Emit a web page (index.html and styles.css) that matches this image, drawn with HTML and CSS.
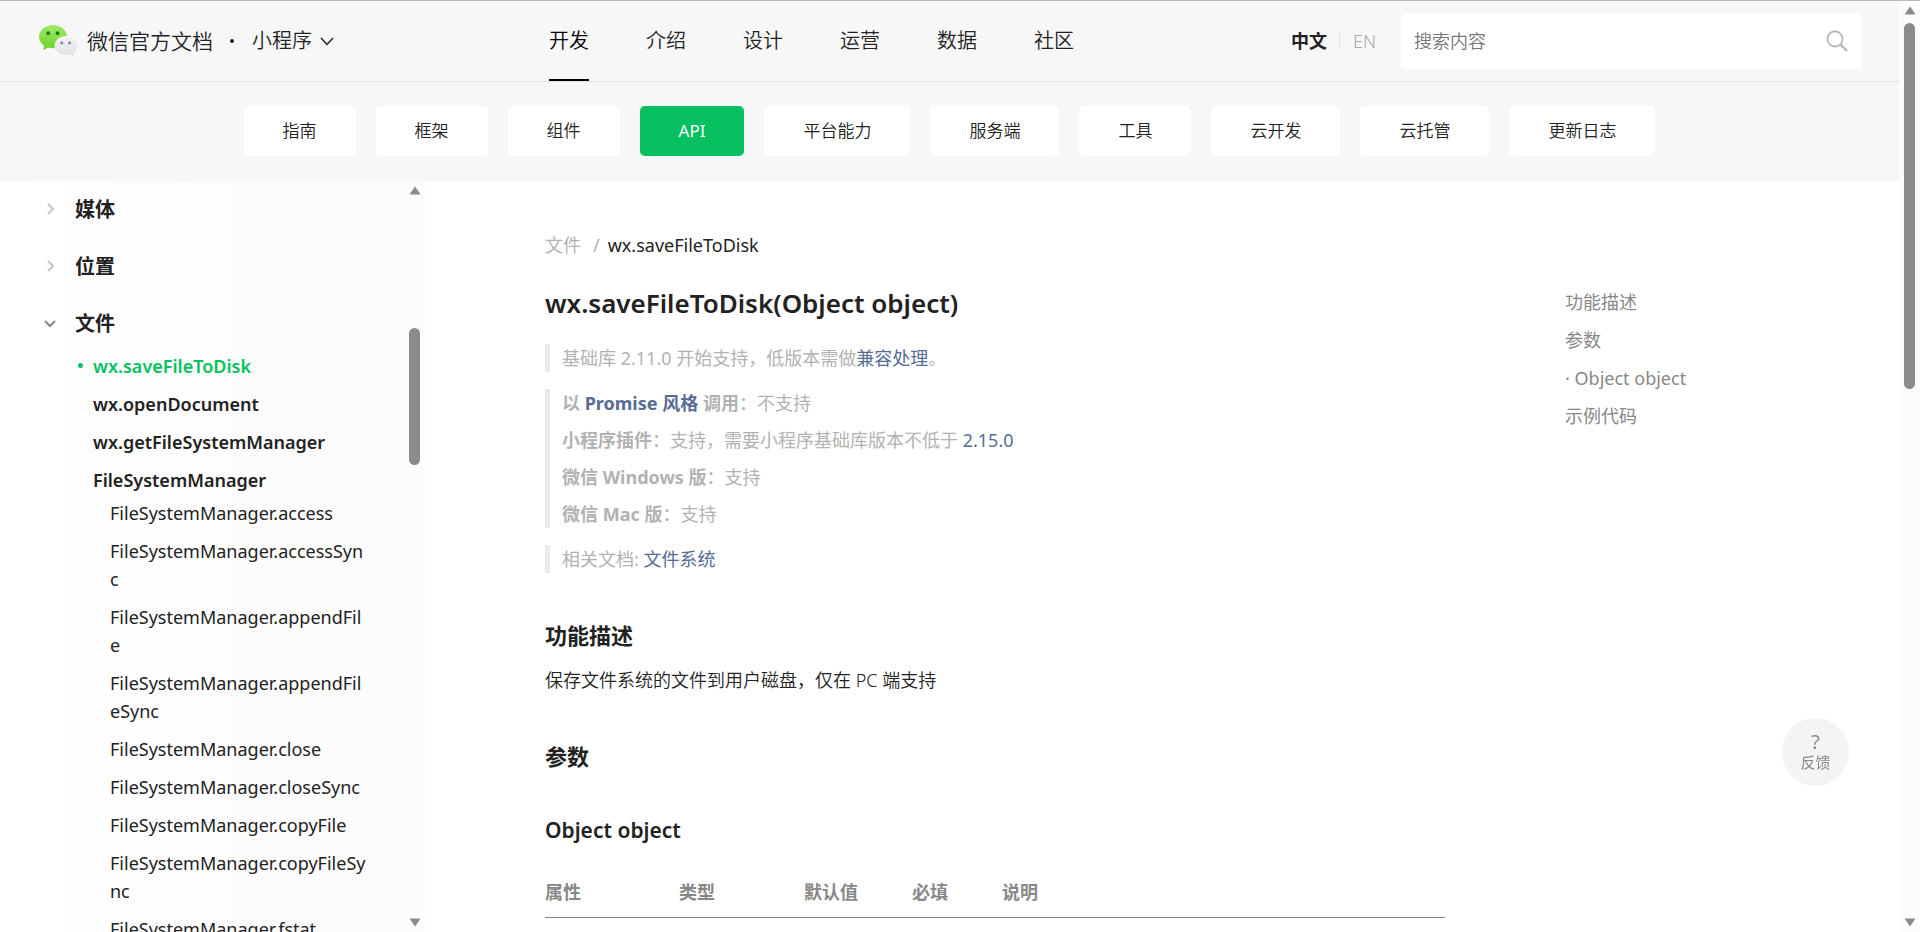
FILE: index.html
```html
<!DOCTYPE html>
<html lang="zh-CN">
<head>
<meta charset="utf-8">
<title>wx.saveFileToDisk(Object object) | 微信开放文档</title>
<link rel="stylesheet" href="styles.css">
</head>
<body>
<div class="page">
  <div class="view">
    <header class="header">
      <div class="brand">
        <svg class="logo" width="38" height="32" viewBox="0 0 38 32" aria-hidden="true">
          <defs>
            <linearGradient id="green" x1="0" y1="0" x2="0" y2="1"><stop offset="0" stop-color="#9eea6a"/><stop offset="1" stop-color="#6fcf2c"/></linearGradient>
            <linearGradient id="grey" x1="0" y1="0" x2="0" y2="1"><stop offset="0" stop-color="#f3f4f6"/><stop offset="1" stop-color="#dfe1e6"/></linearGradient>
          </defs>
          <path fill="url(#green)" d="M14 0C6.300 0 0 5.200 0 11.800c0 3.700 2 7 5.200 9.200L4.200 24.200c-.1.500.3.800.7.600l4.200-2.200c1.600.4 3.200.7 4.900.7 7.700 0 14-5.200 14-11.600C28 5.200 21.700 0 14 0z"/>
          <circle cx="9.200" cy="8.200" r="1.900" fill="#1f7a1f"/><circle cx="18.500" cy="8.200" r="1.900" fill="#1f7a1f"/>
          <path fill="url(#grey)" d="M27 11c6.300 0 11.300 4.300 11.300 9.700 0 3-1.600 5.600-4.100 7.400l.8 2.500c.1.400-.3.700-.6.500l-3.400-1.700c-1.300.3-2.600.5-4 .5-6.300 0-11.400-4.200-11.400-9.400S20.700 11 27 11z"/>
          <circle cx="22.800" cy="17.800" r="1.600" fill="#8d9094"/><circle cx="30.500" cy="17.800" r="1.600" fill="#8d9094"/>
        </svg>
        <a class="brand-name" href="#">微信官方文档</a>
        <span class="brand-dot"></span>
        <button class="product" type="button">小程序
          <svg width="14" height="9" viewBox="0 0 14 9" fill="none" stroke="#222" stroke-width="1.500" aria-hidden="true"><path d="M1 1l6 6.500L13 1"/></svg>
        </button>
      </div>
      <nav class="nav">
        <a class="nav-link nav-active" href="#">开发</a>
        <a class="nav-link" href="#">介绍</a>
        <a class="nav-link" href="#">设计</a>
        <a class="nav-link" href="#">运营</a>
        <a class="nav-link" href="#">数据</a>
        <a class="nav-link" href="#">社区</a>
      </nav>
      <div class="lang"><a class="lang-on" href="#">中文</a><a class="lang-off" href="#">EN</a></div>
      <form class="search">
        <input class="search-input" type="text" placeholder="搜索内容" aria-label="搜索内容">
        <button class="search-btn" type="button" aria-label="搜索">
          <svg width="22" height="22" viewBox="0 0 22 22" fill="none" stroke="#b2b2b2" stroke-width="1.600" aria-hidden="true"><circle cx="9" cy="9" r="7.600"/><path d="M14.500 14.500L21 21" stroke-width="2"/></svg>
        </button>
      </form>
    </header>
    <nav class="tabs">
      <a class="tab" href="#">指南</a>
      <a class="tab" href="#">框架</a>
      <a class="tab" href="#">组件</a>
      <a class="tab tab-active" href="#">API</a>
      <a class="tab" href="#">平台能力</a>
      <a class="tab" href="#">服务端</a>
      <a class="tab" href="#">工具</a>
      <a class="tab" href="#">云开发</a>
      <a class="tab" href="#">云托管</a>
      <a class="tab" href="#">更新日志</a>
    </nav>
    <div class="body">
      <aside class="side">
        <div class="side-menu">
          <a class="group" href="#"><svg class="chev" width="14" height="14" viewBox="0 0 14 14" aria-hidden="true"><path d="M4 1l5 5-5 5"/></svg>媒体</a>
          <a class="group" href="#"><svg class="chev" width="14" height="14" viewBox="0 0 14 14" aria-hidden="true"><path d="M4 1l5 5-5 5"/></svg>位置</a>
          <a class="group" href="#"><svg class="chev chev-open" width="14" height="14" viewBox="0 0 14 14" aria-hidden="true"><path d="M1 4l5 5 5-5"/></svg>文件</a>
          <ul class="sub">
            <li><a class="item item-on" href="#">wx.saveFileToDisk</a></li>
            <li><a class="item" href="#">wx.openDocument</a></li>
            <li><a class="item" href="#">wx.getFileSystemManager</a></li>
            <li><a class="item" href="#">FileSystemManager</a></li>
          </ul>
          <ul class="leafs">
            <li><a class="leaf" href="#">FileSystemManager.access</a></li>
            <li><a class="leaf" href="#">FileSystemManager.accessSync</a></li>
            <li><a class="leaf" href="#">FileSystemManager.appendFile</a></li>
            <li><a class="leaf" href="#">FileSystemManager.appendFileSync</a></li>
            <li><a class="leaf" href="#">FileSystemManager.close</a></li>
            <li><a class="leaf" href="#">FileSystemManager.closeSync</a></li>
            <li><a class="leaf" href="#">FileSystemManager.copyFile</a></li>
            <li><a class="leaf" href="#">FileSystemManager.copyFileSync</a></li>
            <li><a class="leaf" href="#">FileSystemManager.fstat</a></li>
          </ul>
        </div>
        <div class="bar side-bar">
          <svg class="arrow" width="12" height="9" viewBox="0 0 12 9" aria-hidden="true"><path d="M6 0.500L11.500 8.500H.5z"/></svg>
          <div class="track"><div class="thumb side-thumb"></div></div>
          <svg class="arrow" width="12" height="9" viewBox="0 0 12 9" aria-hidden="true"><path d="M6 8.500L11.500 .5H.5z"/></svg>
        </div>
      </aside>
      <main class="content">
        <div class="crumbs"><a class="crumb" href="#">文件</a><span class="slash">/</span><span>wx.saveFileToDisk</span></div>
        <h1 class="title">wx.saveFileToDisk(Object object)</h1>
        <blockquote class="note"><p>基础库 2.11.0 开始支持，低版本需做<a class="link" href="#">兼容处理</a>。</p></blockquote>
        <blockquote class="note">
          <p><strong>以 <a class="link" href="#">Promise 风格</a> 调用</strong>：不支持</p>
          <p><strong>小程序插件</strong>：支持，需要小程序基础库版本不低于 <a class="link" href="#">2.15.0</a></p>
          <p><strong>微信 Windows 版</strong>：支持</p>
          <p><strong>微信 Mac 版</strong>：支持</p>
        </blockquote>
        <blockquote class="note"><p>相关文档: <a class="link" href="#">文件系统</a></p></blockquote>
        <h2 class="section">功能描述</h2>
        <p class="text">保存文件系统的文件到用户磁盘，仅在 PC 端支持</p>
        <h2 class="section">参数</h2>
        <h3 class="subsection">Object object</h3>
        <table class="params">
          <thead><tr><th class="c-name">属性</th><th class="c-type">类型</th><th class="c-def">默认值</th><th class="c-req">必填</th><th>说明</th></tr></thead>
        </table>
      </main>
      <nav class="toc">
        <a class="toc-link" href="#">功能描述</a>
        <a class="toc-link" href="#">参数</a>
        <a class="toc-link" href="#">· Object object</a>
        <a class="toc-link" href="#">示例代码</a>
      </nav>
    </div>
  </div>
  <div class="bar">
    <svg class="arrow" width="12" height="9" viewBox="0 0 12 9" aria-hidden="true"><path d="M6 0.500L11.500 8.500H.5z"/></svg>
    <div class="track"><div class="thumb page-thumb"></div></div>
    <svg class="arrow" width="12" height="9" viewBox="0 0 12 9" aria-hidden="true"><path d="M6 8.500L11.500 .5H.5z"/></svg>
  </div>
  <button class="feedback" type="button"><span class="feedback-mark">?</span>反馈</button>
</div>
</body>
</html>
```
FILE: styles.css
```css
* { box-sizing: border-box; }
body, h1, h2, h3, p, ul, blockquote { margin: 0; padding: 0; }
body, input, button { font-family: "Noto Sans", "Noto Sans CJK SC", sans-serif; font-weight: 350; }
body { background: #fff; color: #222; font-size: 18px; line-height: 28px; }
a { color: inherit; text-decoration: none; }
ul { list-style: none; }
button { border: 0; background: none; padding: 0; color: inherit; cursor: pointer; }
strong { font-weight: 700; }

.page { display: flex; height: 100vh; border-top: 1px solid #bbb; overflow: hidden; }
.view { flex: 1; min-width: 0; display: flex; flex-direction: column; }

.header { display: flex; align-items: center; height: 81px; padding-right: 37px; background: #f7f7f7; border-bottom: 1px solid #e5e5e5; }
.brand { display: flex; align-items: center; width: 549px; padding-left: 39px; }
.logo { overflow: visible; }
.brand-name { margin-left: 10px; font-size: 21px; }
.brand-dot { width: 4px; height: 4px; margin: 0 18px 0 17px; border-radius: 50%; background: #222; }
.product { display: flex; align-items: center; gap: 8px; font-size: 20px; line-height: 28px; }
.nav { display: flex; gap: 57px; flex: 1; align-self: stretch; }
.nav-link { display: flex; align-items: center; font-size: 20px; border-bottom: 2px solid transparent; border-top: 2px solid transparent; }
.nav-active { color: #000; border-bottom-color: #000; }
.lang { display: flex; align-items: center; }
.lang-on { padding-right: 12px; line-height: 16px; font-weight: 700; border-right: 1px solid #e0e0e0; }
.lang-off { padding-left: 13px; color: #aaa; }
.search { display: flex; align-items: center; width: 461px; height: 56px; margin-left: 25px; padding: 0 14px 0 13px; background: #fff; border-radius: 4px; }
.search-input { flex: 1; min-width: 0; padding: 0; border: 0; outline: 0; font-size: 18px; background: none; }
.search-input::placeholder { color: #757575; }
.search-btn { display: flex; }

.tabs { display: flex; justify-content: center; gap: 20px; padding: 24px 0 25px; background: #f7f7f7; font-size: 17px; }
.tab { padding: 11px 39px; border-radius: 5px; background: #fff; }
.tab-active { background: #07c160; color: #fff; font-weight: 400; }

.body { flex: 1; min-height: 0; display: flex; }
.side { display: flex; width: 425px; background: linear-gradient(90deg, #fff, #fcfcfc 60%); overflow: hidden; }
.side-menu { flex: 1; padding-left: 44px; }
.group { display: flex; align-items: center; gap: 17px; height: 57px; font-size: 20px; font-weight: 700; }
.chev { fill: none; stroke: #c4c4c4; stroke-width: 2; }
.chev-open { stroke: #888; }
.sub { display: grid; gap: 10px; padding-left: 49px; }
.item { position: relative; display: block; font-weight: 600; }
.item-on { color: #07c160; }
.item-on::before { content: ""; position: absolute; left: -15px; top: 11px; width: 5px; height: 5px; border-radius: 50%; background: #07c160; }
.leafs { display: grid; gap: 10px; width: 324px; padding: 5px 0 0 66px; }
.leaf { display: block; font-weight: 400; word-break: break-all; }

.bar { display: flex; flex-direction: column; align-items: center; width: 21px; padding: 5px 0; background: #fcfcfc; }
.side-bar { background: none; }
.arrow { fill: #8a8a8a; flex: none; }
.track { flex: 1; width: 11px; }
.thumb { border-radius: 6px; background: #8b8b8b; }
.side-thumb { height: 19%; margin-top: 133px; }
.page-thumb { height: 366px; margin-top: 8px; }

.content { flex: 1; min-width: 0; padding: 50px 0 0 120px; }
.crumbs { display: flex; gap: 12px; font-weight: 400; }
.crumb, .slash { color: #b2b2b2; }
.slash { margin-right: -4px; }
.title { margin: 26px 0 23px; font-size: 26px; line-height: 36px; font-weight: 600; }
.note { display: grid; gap: 9px; margin-bottom: 17px; padding-left: 12px; border-left: 5px solid #ebebeb; color: #b2b2b2; }
.note p { font-weight: 400; }
.link { color: #576b95; }
.section { margin: 46px 0 15px; font-size: 22px; line-height: 32px; font-weight: 700; }
.subsection { margin: 42px 0 32px; font-size: 21px; line-height: 32px; font-weight: 600; }
.params { width: 100%; border-collapse: collapse; color: #888; }
.params th { padding: 0 0 11px; text-align: left; border-bottom: 1px solid #888; font-weight: 700; }
.params .c-name { width: 134px; }
.params .c-type { width: 125px; }
.params .c-def { width: 108px; }
.params .c-req { width: 90px; }
.toc { display: flex; flex-direction: column; gap: 10px; width: 334px; margin-left: 120px; padding-top: 107px; color: #888; font-weight: 400; }

.feedback { position: fixed; right: 71px; bottom: 146px; width: 67px; height: 68px; border-radius: 50%; background: #f4f4f4; color: #888; font-size: 15px; line-height: 20px; font-weight: 400; }
.feedback-mark { display: block; font-size: 20px; }
```
